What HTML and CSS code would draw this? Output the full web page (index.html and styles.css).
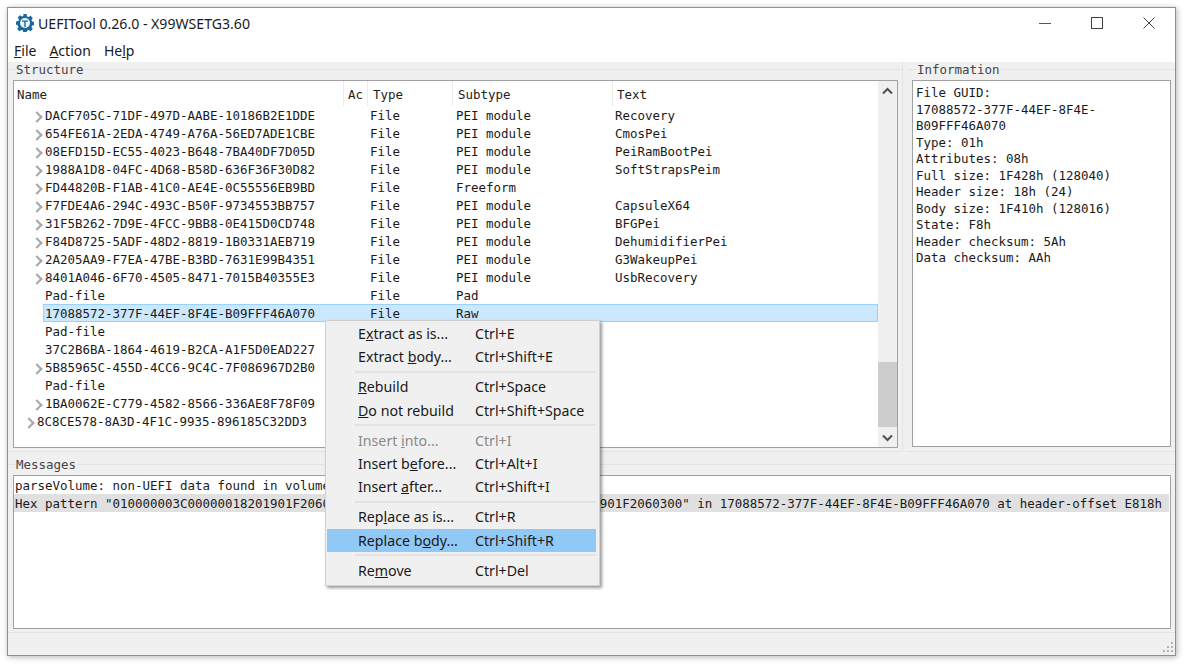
FILE: index.html
```html
<!DOCTYPE html>
<html lang="en">
<head>
    <meta charset="UTF-8">
    <title>UEFITool 0.26.0 - X99WSETG3.60</title>
    <link rel="stylesheet" href="styles.css">
</head>
<body>
    <div class="window">
        <div class="titlebar">
            <svg class="app-icon" width="18" height="18" viewBox="0 0 18 18">
                <path fill="#1c6a9c" d="M7.4 0h3.2l.5 2.4 1.5.6 2-1.3 2.2 2.2-1.3 2 .6 1.5 2.4.5v3.2l-2.4.5-.6 1.5 1.3 2-2.2 2.2-2-1.3-1.5.6-.5 2.4H7.4l-.5-2.4-1.5-.6-2 1.3-2.2-2.2 1.3-2-.6-1.5L0 10.600V7.400l2.400-.5.6-1.500-1.300-2 2.200-2.200 2 1.300 1.500-.6z"/>
                <circle cx="9" cy="9" r="5" fill="#e8f2f8"/>
                <path fill="#1c6a9c" d="M6 6.500h6v1.300H9.700V13H8.300V7.800H6z"/>
            </svg>
            <span class="title-text">UEFITool 0.26.0 - X99WSETG3.60</span>
            <div class="win-buttons">
                <svg width="12" height="12" viewBox="0 0 12 12"><path d="M0 6.500h12" stroke="#555" fill="none"/></svg>
                <svg width="12" height="12" viewBox="0 0 12 12"><rect x=".5" y=".5" width="11" height="11" stroke="#444" fill="none"/></svg>
                <svg width="12" height="12" viewBox="0 0 12 12"><path d="M.5.500l11 11M11.500.500l-11 11" stroke="#444" fill="none"/></svg>
            </div>
        </div>
        <div class="menubar">
            <span><u>F</u>ile</span>
            <span><u>A</u>ction</span>
            <span>He<u>l</u>p</span>
        </div>
        <div class="content">
            <div class="top-panels">
                <div class="group group-structure">
                    <div class="group-title"><span>Structure</span></div>
                    <div class="tree-box">
                        <div class="tree">
                            <div class="tree-head">
                                <div class="col-name">Name</div>
                                <div class="col-ac">Ac</div>
                                <div class="col-type">Type</div>
                                <div class="col-subtype">Subtype</div>
                                <div class="col-text">Text</div>
                            </div>
                            <div class="row kids"><div class="name">DACF705C-71DF-497D-AABE-10186B2E1DDE</div><div class="type">File</div><div class="subtype">PEI module</div><div class="text">Recovery</div></div>
                            <div class="row kids"><div class="name">654FE61A-2EDA-4749-A76A-56ED7ADE1CBE</div><div class="type">File</div><div class="subtype">PEI module</div><div class="text">CmosPei</div></div>
                            <div class="row kids"><div class="name">08EFD15D-EC55-4023-B648-7BA40DF7D05D</div><div class="type">File</div><div class="subtype">PEI module</div><div class="text">PeiRamBootPei</div></div>
                            <div class="row kids"><div class="name">1988A1D8-04FC-4D68-B58D-636F36F30D82</div><div class="type">File</div><div class="subtype">PEI module</div><div class="text">SoftStrapsPeim</div></div>
                            <div class="row kids"><div class="name">FD44820B-F1AB-41C0-AE4E-0C55556EB9BD</div><div class="type">File</div><div class="subtype">Freeform</div><div class="text"></div></div>
                            <div class="row kids"><div class="name">F7FDE4A6-294C-493C-B50F-9734553BB757</div><div class="type">File</div><div class="subtype">PEI module</div><div class="text">CapsuleX64</div></div>
                            <div class="row kids"><div class="name">31F5B262-7D9E-4FCC-9BB8-0E415D0CD748</div><div class="type">File</div><div class="subtype">PEI module</div><div class="text">BFGPei</div></div>
                            <div class="row kids"><div class="name">F84D8725-5ADF-48D2-8819-1B0331AEB719</div><div class="type">File</div><div class="subtype">PEI module</div><div class="text">DehumidifierPei</div></div>
                            <div class="row kids"><div class="name">2A205AA9-F7EA-47BE-B3BD-7631E99B4351</div><div class="type">File</div><div class="subtype">PEI module</div><div class="text">G3WakeupPei</div></div>
                            <div class="row kids"><div class="name">8401A046-6F70-4505-8471-7015B40355E3</div><div class="type">File</div><div class="subtype">PEI module</div><div class="text">UsbRecovery</div></div>
                            <div class="row"><div class="name">Pad-file</div><div class="type">File</div><div class="subtype">Pad</div><div class="text"></div></div>
                            <div class="row selected"><div class="name">17088572-377F-44EF-8F4E-B09FFF46A070</div><div class="type">File</div><div class="subtype">Raw</div><div class="text"></div></div>
                            <div class="row"><div class="name">Pad-file</div></div>
                            <div class="row"><div class="name">37C2B6BA-1864-4619-B2CA-A1F5D0EAD227</div></div>
                            <div class="row kids"><div class="name">5B85965C-455D-4CC6-9C4C-7F086967D2B0</div></div>
                            <div class="row"><div class="name">Pad-file</div></div>
                            <div class="row kids"><div class="name">1BA0062E-C779-4582-8566-336AE8F78F09</div></div>
                            <div class="row kids top-level"><div class="name">8C8CE578-8A3D-4F1C-9935-896185C32DD3</div></div>
                        </div>
                        <div class="scrollbar">
                            <svg class="scroll-arrow" width="19" height="18" viewBox="0 0 19 18"><path d="M5 12.500l4.500-4.500 4.500 4.500" stroke="#505050" stroke-width="2" fill="none"/></svg>
                            <div class="track"><div class="thumb"></div></div>
                            <svg class="scroll-arrow" width="19" height="18" viewBox="0 0 19 18"><path d="M5 6.500l4.500 4.500 4.500-4.500" stroke="#505050" stroke-width="2" fill="none"/></svg>
                        </div>
                    </div>
                </div>
                <div class="group group-info">
                    <div class="group-title"><span>Information</span></div>
                    <div class="info-box">
                        <p>File GUID:</p>
                        <p>17088572-377F-44EF-8F4E-</p>
                        <p>B09FFF46A070</p>
                        <p>Type: 01h</p>
                        <p>Attributes: 08h</p>
                        <p>Full size: 1F428h (128040)</p>
                        <p>Header size: 18h (24)</p>
                        <p>Body size: 1F410h (128016)</p>
                        <p>State: F8h</p>
                        <p>Header checksum: 5Ah</p>
                        <p>Data checksum: AAh</p>
                    </div>
                </div>
            </div>
            <div class="group group-messages">
                <div class="group-title"><span>Messages</span></div>
                <div class="messages-box">
                    <div class="msg">parseVolume: non-UEFI data found in volume's free space</div>
                    <div class="msg current">Hex pattern "010000003C00000018201901F2060300000000000000000000000000000000000901F2060300" in 17088572-377F-44EF-8F4E-B09FFF46A070 at header-offset E818h</div>
                </div>
            </div>
        </div>
        <div class="statusbar">
            <svg width="12" height="12" viewBox="0 0 12 12" fill="#b4b4b4">
                <rect x="9" y="0" width="2" height="2"/>
                <rect x="5" y="4" width="2" height="2"/><rect x="9" y="4" width="2" height="2"/>
                <rect x="1" y="8" width="2" height="2"/><rect x="5" y="8" width="2" height="2"/><rect x="9" y="8" width="2" height="2"/>
            </svg>
        </div>

        <div class="context-menu">
            <div class="item"><span>E<u>x</u>tract as is...</span><span>Ctrl+E</span></div>
            <div class="item"><span>Extract <u>b</u>ody...</span><span>Ctrl+Shift+E</span></div>
            <div class="sep"></div>
            <div class="item"><span><u>R</u>ebuild</span><span>Ctrl+Space</span></div>
            <div class="item"><span><u>D</u>o not rebuild</span><span>Ctrl+Shift+Space</span></div>
            <div class="sep"></div>
            <div class="item disabled"><span>Insert <u>i</u>nto...</span><span>Ctrl+I</span></div>
            <div class="item"><span>Insert b<u>e</u>fore...</span><span>Ctrl+Alt+I</span></div>
            <div class="item"><span>Insert <u>a</u>fter...</span><span>Ctrl+Shift+I</span></div>
            <div class="sep"></div>
            <div class="item"><span>Rep<u>l</u>ace as is...</span><span>Ctrl+R</span></div>
            <div class="item active"><span>Replace b<u>o</u>dy...</span><span>Ctrl+Shift+R</span></div>
            <div class="sep"></div>
            <div class="item"><span>Re<u>m</u>ove</span><span>Ctrl+Del</span></div>
        </div>
    </div>
</body>
</html>
```

FILE: styles.css
```css
* {
    margin: 0;
    padding: 0;
    box-sizing: border-box;
}

body {
    width: 1192px;
    height: 664px;
    padding: 7px 16px 8px 7px;
    background-color: #fff;
    overflow: hidden;
    font-family: "Noto Sans", "Open Sans", sans-serif;
    color: #1a1a1a;
}

.window {
    position: relative;
    display: flex;
    flex-direction: column;
    height: 649px;
    background-color: #f0f0f0;
    border: 1px solid #8f8f8f;
    box-shadow: 1px 1px 6px rgba(0, 0, 0, 0.3);
}

.titlebar {
    flex: none;
    display: flex;
    align-items: center;
    height: 32px;
    padding: 0 0 2px 8px;
    background-color: #fff;
}

.app-icon {
    margin-right: 4px;
}

.title-text {
    font-size: 14.1px;
}

.win-buttons {
    display: flex;
    gap: 40px;
    margin-left: auto;
    padding-right: 20px;
}

.menubar {
    flex: none;
    display: flex;
    gap: 13px;
    height: 22px;
    padding-left: 6px;
    background-color: #fff;
    font-size: 14px;
    line-height: 22px;
}

.content {
    flex: none;
    display: flex;
    flex-direction: column;
    gap: 5px;
    font-family: "DejaVu Sans Mono", monospace;
    font-size: 12.46px;
}

.top-panels {
    display: flex;
    gap: 4px;
}

.group {
    padding: 0 4px 3px 5px;
    border-right: 1px solid #e4e4e4;
    border-bottom: 1px solid #e4e4e4;
}

.group-structure {
    flex: none;
    width: 895px;
}

.group-info {
    flex: 1;
    border-right: 0;
}

.group-messages {
    border-right: 0;
}

.group-title {
    display: flex;
    align-items: center;
    height: 15px;
    margin: 0 -4px 3px -5px;
    color: #444;
}

.group-title::before {
    content: "";
    width: 7px;
    height: 1px;
    background-color: #e4e4e4;
}

.group-info .group-title::before {
    width: 9px;
}

.group-title::after {
    content: "";
    flex: 1;
    height: 1px;
    background-color: #e4e4e4;
}

.group-title span {
    padding: 0 1px;
}

.tree-box,
.info-box,
.messages-box {
    background-color: #fff;
    border: 1px solid #a0a0a0;
}

.tree-box {
    display: flex;
    height: 368px;
}

.tree {
    flex: 1;
    overflow: hidden;
}

.tree-head {
    display: flex;
    height: 25px;
    line-height: 27px;
    color: #222;
}

.tree-head div {
    height: 25px;
    padding-left: 4px;
    border-right: 1px solid #ececec;
}

.tree-head .col-name {
    width: 330px;
    padding-left: 3px;
}

.col-ac {
    width: 24px;
}

.tree-head .col-type {
    width: 85px;
    padding-left: 5px;
}

.tree-head .col-subtype {
    width: 160px;
    padding-left: 5px;
}

.tree-head .col-text {
    flex: 1;
    border-right: 0;
}

.row {
    position: relative;
    display: flex;
    height: 18px;
    line-height: 20px;
}

.name {
    width: 356px;
    padding-left: 31px;
    white-space: nowrap;
}

.type {
    width: 86px;
}

.subtype {
    width: 159px;
}

.text {
    flex: 1;
}

.kids .name::before {
    content: "";
    position: absolute;
    left: 19px;
    top: 7px;
    width: 6px;
    height: 6px;
    border-top: 2px solid #a6a6a6;
    border-right: 2px solid #a6a6a6;
    transform: rotate(45deg);
}

.top-level .name {
    padding-left: 23px;
}

.top-level .name::before {
    left: 11px;
}

.selected {
    margin-left: 29px;
    background-color: #cce8ff;
    outline: 1px solid #99d1ff;
    outline-offset: -1px;
}

.selected .name {
    width: 327px;
    padding-left: 2px;
}

.scrollbar {
    flex: none;
    display: flex;
    flex-direction: column;
    width: 19px;
    background-color: #f0f0f0;
}

.scroll-arrow {
    flex: none;
}

.track {
    flex: 1;
    display: flex;
    align-items: flex-end;
}

.thumb {
    width: 100%;
    height: 65px;
    margin-bottom: 2px;
    background-color: #cdcdcd;
}

.info-box {
    height: 367px;
    padding: 4px 3px 3px;
    line-height: 16.5px;
}

.messages-box {
    height: 154px;
    padding-right: 1px;
}

.msg {
    height: 18px;
    padding-left: 1px;
    line-height: 20px;
    white-space: nowrap;
    overflow: hidden;
}

.msg.current {
    background-color: #e0e0e0;
}

.statusbar {
    flex: 1;
    display: flex;
    justify-content: flex-end;
    align-items: flex-end;
    padding: 0 1px 1px 0;
}

.context-menu {
    position: absolute;
    left: 317px;
    top: 312px;
    width: 275px;
    padding: 1px 3px 3px 1px;
    background-color: #f0f0f0;
    border: 1px solid #d0d0d0;
    box-shadow: 2px 2px 3px rgba(0, 0, 0, 0.4);
    font-size: 14.2px;
}

.item {
    display: flex;
    height: 23.2px;
    padding-left: 31px;
    line-height: 23.2px;
    color: #1a1a1a;
}

.item span:first-child {
    width: 117px;
}

.item.disabled {
    color: #8a8a8a;
}

.item.active {
    background-color: #90c8f6;
}

.sep {
    height: 2px;
    margin: 2.5px 0 2.5px 28px;
    background-color: #e2e2e2;
}
```
